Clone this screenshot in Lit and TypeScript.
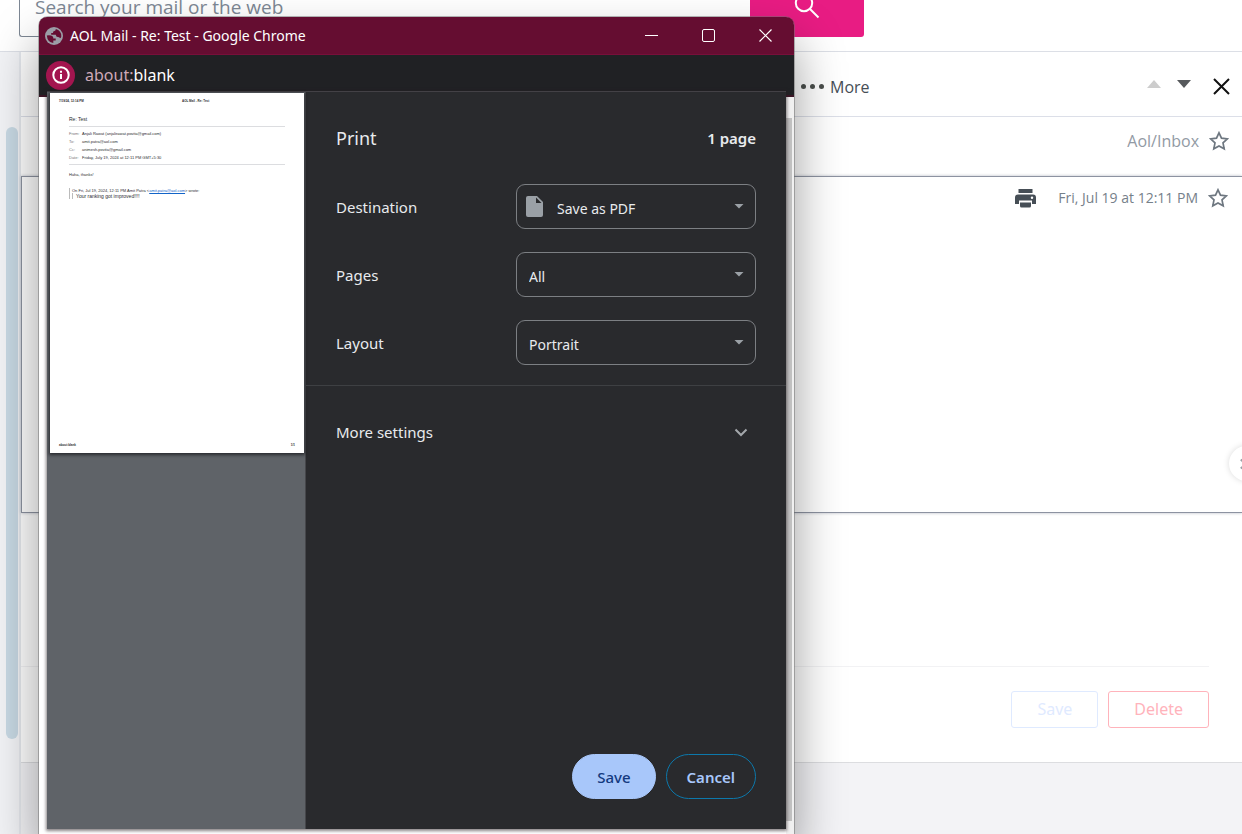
import { LitElement, html, css } from "lit";
import { customElement } from "lit/decorators.js";

const star = html`<svg class="star" viewBox="0 0 20 20" width="20" height="20" aria-hidden="true">
  <path d="M10 1.8l2.5 5.4 5.9.7-4.4 4 1.2 5.9-5.2-2.9-5.2 2.9L6 11.9l-4.4-4 5.9-.7z" fill="none" stroke="#6e7780" stroke-width="1.7" stroke-linejoin="miter"/>
</svg>`;

@customElement("print-dialog")
class PrintDialog extends LitElement {
  static styles = css`
    :host {
      display: flex;
      box-sizing: border-box;
      border-top: 1px solid #434146;
      background: #292a2d;
      color: #e8eaed;
      font: 16px/24px "Noto Sans", "Open Sans", sans-serif;
      box-shadow: 0 1px 3px 1px rgba(40, 30, 34, 0.55);
    }
    .preview {
      flex: none;
      width: 254px;
      padding: 1px 1px 0 3px;
      background: #5f6368;
      border-right: 1px solid #46474b;
    }
    .sheet {
      display: flex;
      flex-direction: column;
      box-sizing: border-box;
      height: 360px;
      padding: 6px 9px;
      background: #fff;
      color: #2c2c30;
      font: 4px/5px "Liberation Sans", Arial, sans-serif;
      box-shadow: 0 1px 3px 1px rgba(20, 20, 24, 0.7);
    }
    .running {
      display: grid;
      grid-template-columns: 123px 1fr auto;
      font-size: 3px;
      font-weight: 700;
      line-height: 4px;
    }
    .letter { flex: 1; padding: 13px 10px 0; }
    .letter h2 {
      margin: 0 0 3px;
      font: 5px/7px "Liberation Sans", Arial, sans-serif;
    }
    .letter dl {
      display: grid;
      grid-template-columns: 13px 1fr;
      gap: 3px 0;
      margin: 0;
      padding: 4px 0;
      border: solid #dcdde0;
      border-width: 1px 0;
    }
    dt { color: #777; }
    dd { margin: 0; }
    .letter p { margin: 7px 0 11px; }
    .quote {
      margin: 0;
      padding: 0 0 0 2px;
      border-left: 1px solid #bbb;
    }
    .quote div { padding-left: 3px; border-left: 1px solid #bbb; font-size: 5px; line-height: 6px; }
    .quote a { color: #1264c8; }
    .settings {
      display: flex;
      flex: 1;
      flex-direction: column;
      min-width: 0;
    }
    .head {
      display: flex;
      align-items: center;
      justify-content: space-between;
      padding: 34px 30px;
    }
    h1 { margin: 0; font-size: 18px; font-weight: 400; line-height: 24px; }
    .count { font-size: 15px; font-weight: 600; }
    .rows {
      display: grid;
      gap: 23px;
      padding: 0 30px 20px;
      border-bottom: 1px solid #3e4043;
    }
    .row {
      display: grid;
      grid-template-columns: 1fr 240px;
      align-items: center;
      font-size: 15px;
    }
    .field { display: grid; }
    .field > * { grid-area: 1 / 1; }
    select {
      appearance: none;
      box-sizing: border-box;
      height: 45px;
      width: 100%;
      padding: 4px 36px 0 12px;
      border: 1px solid #7c7f83;
      border-radius: 9px;
      background: transparent;
      color: #e8eaed;
      font: 14px/20px "Noto Sans", "Open Sans", sans-serif;
    }
    .with-icon select { padding-left: 40px; }
    .file, .arrow { align-self: center; pointer-events: none; }
    .file { margin-left: 10px; }
    .arrow { justify-self: end; margin-right: 12px; }
    .more {
      display: flex;
      align-items: center;
      justify-content: space-between;
      padding: 34px 38px 34px 30px;
      border: 0;
      background: none;
      color: inherit;
      font: 15px/24px "Noto Sans", "Open Sans", sans-serif;
    }
    .actions {
      display: flex;
      justify-content: flex-end;
      gap: 10px;
      margin-top: auto;
      padding: 30px;
    }
    .actions button {
      height: 45px;
      padding: 0 20px;
      border: 1px solid #0c78ab;
      border-radius: 23px;
      background: transparent;
      color: #a8c7fa;
      font: 600 15px/20px "Noto Sans", "Open Sans", sans-serif;
    }
    .actions .primary {
      padding: 0 24px;
      border-color: #a8c7fa;
      background: #a8c7fa;
      color: #143a80;
      font-weight: 500;
    }
  `;

  private row(id: string, label: string, value: string, icon = false) {
    return html`<div class="row">
      <label for=${id}>${label}</label>
      <div class="field ${icon ? "with-icon" : ""}">
        <select id=${id}><option>${value}</option></select>
        ${icon
          ? html`<svg class="file" width="17" height="21" viewBox="0 0 17 21" aria-hidden="true">
              <path d="M2 0h9l6 6v13a2 2 0 0 1-2 2H2a2 2 0 0 1-2-2V2a2 2 0 0 1 2-2z" fill="#9aa0a6"/>
              <path d="M10 1.5V7h5.5z" fill="#292a2d"/>
            </svg>`
          : ""}
        <svg class="arrow" width="10" height="5" viewBox="0 0 10 5" aria-hidden="true"><path d="M0.5 0h9L5 4.5z" fill="#9aa0a6"/></svg>
      </div>
    </div>`;
  }

  render() {
    return html`
      <div class="preview">
        <div class="sheet">
          <div class="running"><span>7/19/24, 12:14 PM</span><span>AOL Mail - Re: Test</span><span></span></div>
          <div class="letter">
            <h2>Re: Test</h2>
            <dl>
              <dt>From:</dt><dd>Anjali Rawat (anjalirawat.povita@gmail.com)</dd>
              <dt>To:</dt><dd>amit.patra@aol.com</dd>
              <dt>Cc:</dt><dd>animesh.povita@gmail.com</dd>
              <dt>Date:</dt><dd>Friday, July 19, 2024 at 12:11 PM GMT+5:30</dd>
            </dl>
            <p>Haha, thanks!</p>
            <blockquote class="quote">
              On Fri, Jul 19, 2024, 12:11 PM Amit Patra &lt;<a href="mailto:amit.patra@aol.com">amit.patra@aol.com</a>&gt; wrote:
              <div>Your ranking got improved!!!!</div>
            </blockquote>
          </div>
          <div class="running"><span>about:blank</span><span></span><span>1/1</span></div>
        </div>
      </div>
      <div class="settings">
        <div class="head"><h1>Print</h1><span class="count">1 page</span></div>
        <div class="rows">
          ${this.row("destination", "Destination", "Save as PDF", true)}
          ${this.row("pages", "Pages", "All")}
          ${this.row("layout", "Layout", "Portrait")}
        </div>
        <button class="more" type="button">
          More settings
          <svg width="14" height="9" viewBox="0 0 14 9" aria-hidden="true"><path d="M1.5 1.5L7 7l5.500-5.500" fill="none" stroke="#a3a7ab" stroke-width="2"/></svg>
        </button>
        <div class="actions">
          <button class="primary" type="button">Save</button>
          <button type="button">Cancel</button>
        </div>
      </div>
    `;
  }
}

@customElement("popup-window")
class PopupWindow extends LitElement {
  static styles = css`
    :host {
      display: flex;
      flex-direction: column;
      border-radius: 9px 9px 0 0;
      background: #fff;
      font-family: "Noto Sans", "Open Sans", sans-serif;
      box-shadow: 0 0 0 1px rgba(110, 110, 110, 0.5), 0 26px 50px rgba(0, 0, 0, 0.4);
    }
    .title {
      display: flex;
      align-items: center;
      box-sizing: border-box;
      height: 38px;
      padding-left: 6px;
      border-bottom: 1px solid #780f3a;
      border-radius: 8px 8px 0 0;
      background: #650d31;
      color: #fff;
      font-size: 14px;
      line-height: 20px;
    }
    .title .name { flex: 1; margin-left: 7px; }
    .title button {
      display: grid;
      place-items: center;
      width: 57px;
      height: 37px;
      padding: 0;
      border: 0;
      background: none;
    }
    .address {
      display: flex;
      align-items: center;
      box-sizing: border-box;
      height: 42px;
      padding-left: 7px;
      border-bottom: 2px solid #3b1525;
      background: #202124;
      color: #fff;
      font-size: 16px;
    }
    .info {
      display: grid;
      place-items: center;
      width: 29px;
      height: 29px;
      margin-right: 10px;
      padding: 0;
      border: 0;
      border-radius: 50%;
      background: #a3154f;
    }
    .scheme { color: #cfa9b8; }
    .page {
      display: flex;
      flex: 1;
      justify-content: flex-end;
    }
    .track {
      box-sizing: border-box;
      width: 8px;
      padding: 21px 2px 13px 0;
      background: #f0f0f0;
    }
    .thumb { height: 100%; background: #c1c1c1; }
    .dialog {
      position: absolute;
      inset: 74px 8px 5px 8px;
    }
  `;

  render() {
    return html`
      <div class="title">
        <svg width="18" height="18" viewBox="0 0 18 18" aria-hidden="true">
          <circle cx="9" cy="9" r="9" fill="#9b9da6"/>
          <path d="M1.800 8.500q4-.6 5.700.8 1 .9.800 2.200h2.400v2H8.300v2.400Q2.500 15.500 1.800 8.500zM10.800 2q.2 1.600-1.300 2-1.700.1-1.500 2H6.200v1.700h4.600q.2 2.300 2 2.300 1.700 0 2.200 1.300 1-.2 1.300-1.800Q16.500 3.500 10.800 2z" fill="#650d31"/>
        </svg>
        <span class="name">AOL Mail - Re: Test - Google Chrome</span>
        <button type="button" aria-label="Minimize"><svg width="13" height="13" viewBox="0 0 13 13"><path d="M0 6.500h13" stroke="#fff"/></svg></button>
        <button type="button" aria-label="Maximize"><svg width="13" height="13" viewBox="0 0 13 13"><rect x=".5" y=".5" width="12" height="12" rx="1.500" fill="none" stroke="#fff"/></svg></button>
        <button type="button" aria-label="Close"><svg width="13" height="13" viewBox="0 0 13 13"><path d="M.5.5l12 12M12.500.5l-12 12" stroke="#fff" stroke-width="1.200"/></svg></button>
      </div>
      <div class="address">
        <button class="info" type="button" aria-label="View site information">
          <svg width="18" height="18" viewBox="0 0 18 18"><circle cx="9" cy="9" r="7.700" fill="none" stroke="#fff" stroke-width="2"/><path d="M9 8v5M9 4.800v2" stroke="#fff" stroke-width="2"/></svg>
        </button>
        <span><span class="scheme">about:</span>blank</span>
      </div>
      <div class="page"><div class="track"><div class="thumb"></div></div></div>
      <print-dialog class="dialog"></print-dialog>
    `;
  }
}

@customElement("app-root")
class AppRoot extends LitElement {
  static styles = css`
    :host {
      display: flex;
      flex-direction: column;
      position: relative;
      min-height: 100vh;
      overflow: hidden;
      background: #f3f3f6;
      color: #464e56;
      font: 16px/24px "Open Sans", "Noto Sans", sans-serif;
    }
    header {
      display: flex;
      align-items: flex-end;
      box-sizing: border-box;
      height: 52px;
      padding: 0 378px 14px 19px;
      border-bottom: 1px solid #dcdfe6;
      background: #fff;
    }
    .search {
      flex: 1;
      box-sizing: border-box;
      min-width: 0;
      height: 60px;
      padding: 0 15px;
      border: 1px solid #7d8794;
      border-right: 0;
      border-radius: 3px 0 0 3px;
      color: #464e56;
      font: 19px/26px "Open Sans", "Noto Sans", sans-serif;
    }
    .search::placeholder { color: #7d8794; opacity: 1; }
    .go {
      display: grid;
      place-items: center;
      width: 114px;
      height: 60px;
      padding: 0;
      border: 0;
      border-radius: 0 3px 3px 0;
      background: #e81c83;
    }
    .body { display: flex; flex: 1; }
    .rail {
      flex: none;
      box-sizing: border-box;
      width: 21px;
      padding: 75px 1px 95px 6px;
      border-right: 2px solid #e5e8ed;
      background: #f2f3f6;
    }
    .rail div { height: 100%; border-radius: 6px; background: #c7d8e3; }
    main { flex: 1; min-width: 0; }
    .panel { background: #fff; border-bottom: 1px solid #dcdde0; }
    .bar, .folder, .meta {
      display: flex;
      align-items: center;
      justify-content: flex-end;
    }
    .bar {
      box-sizing: border-box;
      height: 65px;
      padding: 5px 12px 0 780px;
      border-bottom: 1px solid #dcdfe8;
    }
    .menu {
      display: flex;
      align-items: center;
      gap: 6px;
      margin-right: auto;
      padding: 0;
      border: 0;
      background: none;
      color: #464e56;
      font: inherit;
    }
    .icon {
      display: grid;
      place-items: center;
      padding: 0;
      border: 0;
      background: none;
    }
    .nav { margin-right: 16px; padding-bottom: 6px; }
    .close { margin-left: 6px; }
    .folder {
      box-sizing: border-box;
      height: 59px;
      gap: 10px;
      padding: 0 13px 11px 0;
      color: #929aa4;
    }
    .message {
      box-sizing: border-box;
      min-height: 337px;
      border: solid #8d93a1;
      border-width: 1px 0 1px 1px;
      box-shadow: 0 0 3px #b8bcc4;
    }
    .meta {
      gap: 10px;
      padding: 9px 14px 0 0;
      color: #76808a;
      font-size: 14px;
    }
    .print { margin-right: 12px; }
    .reply { min-height: 153px; margin-right: 33px; border-bottom: 1px solid #f2f2f4; }
    .tools {
      display: flex;
      justify-content: flex-end;
      gap: 10px;
      padding: 24px 33px 34px;
    }
    .tools button {
      box-sizing: border-box;
      height: 37px;
      padding: 0 25px 1px;
      border: 1px solid currentColor;
      border-radius: 3px;
      background: #fff;
      color: #ffb3bb;
      font: 16px/24px "Noto Sans", "Open Sans", sans-serif;
    }
    .tools .save { color: #dfeaff; }
    .next {
      position: absolute;
      top: 446px;
      right: -22px;
      display: grid;
      place-items: center start;
      width: 35px;
      height: 35px;
      padding: 0 0 0 11px;
      border: 0;
      border-radius: 50%;
      background: #fff;
      box-shadow: 0 0 6px rgba(0, 0, 0, 0.15);
    }
    .popup {
      position: absolute;
      top: 17px;
      bottom: 0;
      left: 39px;
      width: 755px;
    }
  `;

  private triangle(up: boolean, color: string) {
    return html`<svg width="14" height="8" viewBox="0 0 14 8" aria-hidden="true"><path d=${up ? "M7 0l7 8H0z" : "M0 0h14L7 8z"} fill=${color}/></svg>`;
  }

  render() {
    return html`
      <header>
        <input class="search" type="search" aria-label="Search" placeholder="Search your mail or the web" />
        <button class="go" type="button" aria-label="Search">
          <svg width="26" height="26" viewBox="0 0 26 26"><circle cx="10" cy="9" r="8.200" fill="none" stroke="#fff" stroke-width="2"/><path d="M16 15l8.500 8.500" stroke="#fff" stroke-width="2"/></svg>
        </button>
      </header>
      <div class="body">
        <div class="rail"><div></div></div>
        <main>
          <div class="panel">
            <div class="bar">
              <button class="menu" type="button">
                <svg width="23" height="5" viewBox="0 0 23 5" aria-hidden="true" fill="#4a4f4c"><circle cx="2.500" cy="2.500" r="2.500"/><circle cx="11.500" cy="2.500" r="2.500"/><circle cx="20.500" cy="2.500" r="2.500"/></svg>
                More
              </button>
              <button class="icon nav" type="button" aria-label="Previous message">${this.triangle(true, "#cdcdcd")}</button>
              <button class="icon nav" type="button" aria-label="Next message">${this.triangle(false, "#56595c")}</button>
              <button class="icon close" type="button" aria-label="Close message"><svg width="17" height="17" viewBox="0 0 17 17"><path d="M1 1l15 15M16 1L1 16" stroke="#111" stroke-width="2"/></svg></button>
            </div>
            <div class="folder"><span>Aol/Inbox</span><button class="icon" type="button" aria-label="Star conversation">${star}</button></div>
            <article class="message">
              <div class="meta">
                <button class="icon print" type="button" aria-label="Print">
                  <svg width="21" height="20" viewBox="0 0 21 20"><path d="M3.500 1h14v4h-14zM3 6.500h15a3 3 0 0 1 3 3V16h-4v-3.500H4V16H0V9.500a3 3 0 0 1 3-3z" fill="#464e56"/><path d="M5 14.500h11V18a1.500 1.500 0 0 1-1.500 1.500h-8A1.500 1.500 0 0 1 5 18z" fill="#464e56"/><circle cx="17" cy="9.800" r="1.200" fill="#fff"/></svg>
                </button>
                <time>Fri, Jul 19 at 12:11 PM</time>
                <button class="icon" type="button" aria-label="Star message">${star}</button>
              </div>
            </article>
            <div class="reply"></div>
            <div class="tools">
              <button class="save" type="button">Save</button>
              <button type="button">Delete</button>
            </div>
          </div>
        </main>
      </div>
      <button class="next" type="button" aria-label="Expand side panel"><svg width="8" height="12" viewBox="0 0 8 12"><path d="M.8 1.500L5.500 6 .8 10.500" fill="none" stroke="#9aa0a6" stroke-width="2"/></svg></button>
      <popup-window class="popup"></popup-window>
    `;
  }
}
